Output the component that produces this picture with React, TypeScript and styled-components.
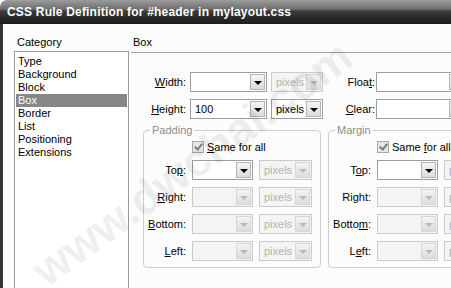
import React from 'react';
import styled, { createGlobalStyle } from 'styled-components';

const GlobalStyle = createGlobalStyle`
    html, body {
        margin: 0;
        padding: 0;
        background: #ffffff;
    }
    body {
        font-family: "Liberation Sans", Arial, sans-serif;
        font-size: 11px;
        color: #000;
    }
`;

const Window = styled.div`
    position: relative;
    width: 451px;
    height: 288px;
    overflow: hidden;
    background: #ffffff;
`;

const TitleBar = styled.div`
    height: 24px;
    display: flex;
    align-items: center;
    padding-left: 7px;
    border-top-left-radius: 7px;
    background: linear-gradient(to bottom, #9c9c9c 0, #707070 9px, #3c3c3c 11px, #272727 19px, #1c1c1c 24px);
    color: #ffffff;
    font-weight: bold;
    font-size: 12px;
    letter-spacing: 0.2px;
`;

const Body = styled.div`
    display: flex;
    height: 264px;
    border-left: 3px solid #333333;
    background: #fcfcfc;
`;

const Sidebar = styled.div`
    width: 117px;
    flex-shrink: 0;
    padding: 12px 0 0 11px;
`;

const Caption = styled.div`
    height: 13px;
    line-height: 13px;
    padding-left: 3px;
`;

const CategoryList = styled.ul`
    list-style: none;
    margin: 2px 0 0;
    padding: 3px 1px;
    width: 111px;
    height: 300px;
    border: 1px solid #9a9a9a;
    background: #ffffff;
`;

const CategoryItem = styled.li<{ $active?: boolean }>`
    height: 13px;
    line-height: 13px;
    padding-left: 2px;
    background: ${(p) => (p.$active ? '#878787' : 'transparent')};
    color: ${(p) => (p.$active ? '#ffffff' : '#000000')};
`;

const Main = styled.div`
    flex: 1;
    min-width: 0;
    padding-top: 12px;
`;

const PanelHeader = styled.div`
    height: 13px;
    line-height: 13px;
    padding: 0 0 3px 2px;
    border-bottom: 1px solid #a4a4a4;
`;

const Form = styled.div`
    display: flex;
    flex-direction: column;
    gap: 7px;
    padding-top: 19px;
`;

const Row = styled.div`
    display: flex;
    align-items: center;
    height: 20px;
`;

const Label = styled.span<{ $w: number }>`
    width: ${(p) => p.$w}px;
    flex-shrink: 0;
    text-align: right;
    white-space: nowrap;
`;

const SelectBox = styled.div<{ $w: number; $off?: boolean; $gap: number }>`
    display: flex;
    box-sizing: border-box;
    width: ${(p) => p.$w}px;
    height: 20px;
    margin-left: ${(p) => p.$gap}px;
    flex-shrink: 0;
    padding: 1px;
    border: 1px solid ${(p) => (p.$off ? '#cbcbcb' : '#9e9e9e')};
    background: ${(p) => (p.$off ? '#f4f4f4' : '#ffffff')};
    color: ${(p) => (p.$off ? '#b2b2b2' : '#000000')};
`;

const SelectValue = styled.span`
    flex: 1;
    padding-left: 3px;
    line-height: 16px;
    white-space: nowrap;
    overflow: hidden;
`;

const SelectButton = styled.span<{ $off?: boolean }>`
    display: flex;
    align-items: center;
    justify-content: center;
    box-sizing: border-box;
    width: 15px;
    height: 16px;
    border: 1px solid ${(p) => (p.$off ? '#d6d6d6' : '#b4b4b4')};
    background: linear-gradient(to bottom, #f4f4f4, #dcdcdc);

    &::after {
        content: '';
        border-left: 4px solid transparent;
        border-right: 4px solid transparent;
        border-top: 4px solid ${(p) => (p.$off ? '#b8b8b8' : '#000000')};
        margin-top: 1px;
    }
`;

const Groups = styled.div`
    display: flex;
    gap: 7px;
    margin: -2px 0 0 12px;
`;

const Group = styled.fieldset`
    flex-shrink: 0;
    width: 167px;
    margin: 0;
    padding: 0 7px 6px 2px;
    border: 1px solid #cdcdcd;
    border-radius: 4px;
    display: flex;
    flex-direction: column;
    gap: 7px;
`;

const Legend = styled.legend`
    margin-left: 4px;
    padding: 0 2px;
    height: 13px;
    line-height: 13px;
    color: #8c8c8c;
`;

const CheckRow = styled.label`
    display: flex;
    align-items: center;
    height: 12px;
    margin: 4px 0 0 46px;
`;

const CheckBox = styled.span`
    position: relative;
    box-sizing: border-box;
    width: 12px;
    height: 12px;
    margin-right: 3px;
    border: 1px solid #a8a8a8;
    background: #e6e6e6;

    &::after {
        content: '';
        position: absolute;
        left: 3px;
        top: 0px;
        width: 3px;
        height: 6px;
        border: solid #7c7c7c;
        border-width: 0 2px 2px 0;
        transform: rotate(40deg);
    }
`;

const Watermark = styled.div`
    position: absolute;
    left: -8px;
    top: 136px;
    width: 400px;
    text-align: center;
    transform: rotate(-36deg);
    font-size: 46px;
    font-weight: bold;
    color: rgba(0, 0, 0, 0.08);
    white-space: nowrap;
    pointer-events: none;
`;

interface SelectProps {
    w: number;
    gap: number;
    value?: string;
    off?: boolean;
}

const Select: React.FC<SelectProps> = ({ w, gap, value = '', off }) => (
    <SelectBox $w={w} $gap={gap} $off={off}>
        <SelectValue>{value}</SelectValue>
        <SelectButton $off={off} />
    </SelectBox>
);

const categories = ['Type', 'Background', 'Block', 'Box', 'Border', 'List', 'Positioning', 'Extensions'];

// label text split around the underlined access key
type Key = [string, string, string];

const KeyLabel: React.FC<{ k: Key; w: number }> = ({ k, w }) => (
    <Label $w={w}>
        {k[0]}
        <u>{k[1]}</u>
        {k[2]}
    </Label>
);

interface SideProps {
    title: string;
    check: Key;
    rows: Key[];
}

const SideGroup: React.FC<SideProps> = ({ title, check, rows }) => (
    <Group>
        <Legend>{title}</Legend>
        <CheckRow>
            <CheckBox />
            <span>
                {check[0]}
                <u>{check[1]}</u>
                {check[2]}
            </span>
        </CheckRow>
        {rows.map((r, i) => (
            <Row key={i}>
                <KeyLabel k={r} w={40} />
                <Select w={61} gap={6} off={i > 0} />
                <Select w={53} gap={6} value="pixels" off />
            </Row>
        ))}
    </Group>
);

const App: React.FC = () => (
    <>
        <GlobalStyle />
        <Window>
            <TitleBar>CSS Rule Definition for #header in mylayout.css</TitleBar>
            <Body>
                <Sidebar>
                    <Caption>Category</Caption>
                    <CategoryList>
                        {categories.map((c) => (
                            <CategoryItem key={c} $active={c === 'Box'}>
                                {c}
                            </CategoryItem>
                        ))}
                    </CategoryList>
                </Sidebar>
                <Main>
                    <PanelHeader>Box</PanelHeader>
                    <Form>
                        <Row>
                            <KeyLabel k={['', 'W', 'idth:']} w={55} />
                            <Select w={77} gap={4} />
                            <Select w={52} gap={4} value="pixels" off />
                            <KeyLabel k={['Floa', 't', ':']} w={52} />
                            <Select w={90} gap={1} />
                        </Row>
                        <Row>
                            <KeyLabel k={['', 'H', 'eight:']} w={55} />
                            <Select w={77} gap={4} value="100" />
                            <Select w={52} gap={4} value="pixels" />
                            <KeyLabel k={['', 'C', 'lear:']} w={52} />
                            <Select w={90} gap={1} />
                        </Row>
                        <Groups>
                            <SideGroup
                                title="Padding"
                                check={['', 'S', 'ame for all']}
                                rows={[
                                    ['To', 'p', ':'],
                                    ['', 'R', 'ight:'],
                                    ['', 'B', 'ottom:'],
                                    ['', 'L', 'eft:'],
                                ]}
                            />
                            <SideGroup
                                title="Margin"
                                check={['Same ', 'f', 'or all']}
                                rows={[
                                    ['T', 'o', 'p:'],
                                    ['Ri', 'g', 'ht:'],
                                    ['Botto', 'm', ':'],
                                    ['L', 'e', 'ft:'],
                                ]}
                            />
                        </Groups>
                    </Form>
                </Main>
            </Body>
            <Watermark>www.dwchai.com</Watermark>
        </Window>
    </>
);

export default App;
